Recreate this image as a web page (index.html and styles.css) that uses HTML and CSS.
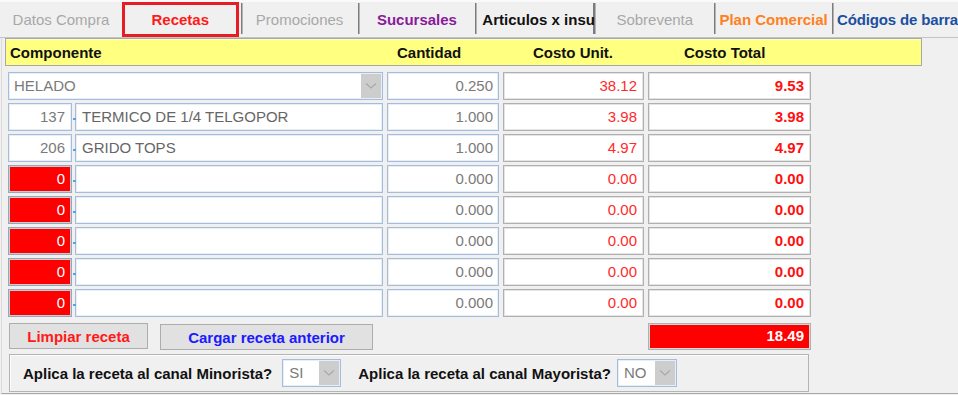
FILE: index.html
```html
<!DOCTYPE html>
<html lang="es">
<head>
  <meta charset="UTF-8" />
  <title>Recetas</title>
  <link rel="stylesheet" href="styles.css">
</head>
<body>
  <div class="tabs">
    <div class="tab tab-first gray">Datos Compra</div>
    <div class="tab tab-active">Recetas</div>
    <div class="tab sep gray w117">Promociones</div>
    <div class="tab sep purple w118">Sucursales</div>
    <div class="tab sep black w119 cut">Articulos x insu</div>
    <div class="tab sep gray w120">Sobreventa</div>
    <div class="tab sep orange w118">Plan Comercial</div>
    <div class="tab sep blue last">Códigos de barra</div>
  </div>

  <div class="panel">
    <div class="grid-head">
      <div class="h1">Componente</div>
      <div class="h2">Cantidad</div>
      <div class="h3">Costo Unit.</div>
      <div class="h4">Costo Total</div>
    </div>

    <div class="rows">
      <div class="row">
        <div class="combo combo-wide">
          <span class="combo-text">HELADO</span>
          <span class="combo-btn"><svg width="12" height="8" viewBox="0 0 12 8"><polyline points="1,1.5 6,6 11,1.5" fill="none" stroke="#a9a9a9" stroke-width="1.2"/></svg></span>
        </div>
        <div class="box box-blue qty">0.250</div>
        <div class="box cost">38.12</div>
        <div class="box total">9.53</div>
      </div>

      <div class="row">
        <div class="comp">
          <div class="box box-blue code">137</div><span class="colon"></span>
          <div class="box box-blue desc">TERMICO DE 1/4 TELGOPOR</div>
        </div>
        <div class="box box-blue qty">1.000</div>
        <div class="box cost">3.98</div>
        <div class="box total">3.98</div>
      </div>

      <div class="row">
        <div class="comp">
          <div class="box box-blue code">206</div><span class="colon"></span>
          <div class="box box-blue desc">GRIDO TOPS</div>
        </div>
        <div class="box box-blue qty">1.000</div>
        <div class="box cost">4.97</div>
        <div class="box total">4.97</div>
      </div>

      <div class="row">
        <div class="comp">
          <div class="box code code-red">0</div><span class="colon"></span>
          <div class="box box-blue desc"></div>
        </div>
        <div class="box box-blue qty">0.000</div>
        <div class="box cost">0.00</div>
        <div class="box total">0.00</div>
      </div>

      <div class="row">
        <div class="comp">
          <div class="box code code-red">0</div><span class="colon"></span>
          <div class="box box-blue desc"></div>
        </div>
        <div class="box box-blue qty">0.000</div>
        <div class="box cost">0.00</div>
        <div class="box total">0.00</div>
      </div>

      <div class="row">
        <div class="comp">
          <div class="box code code-red">0</div><span class="colon"></span>
          <div class="box box-blue desc"></div>
        </div>
        <div class="box box-blue qty">0.000</div>
        <div class="box cost">0.00</div>
        <div class="box total">0.00</div>
      </div>

      <div class="row">
        <div class="comp">
          <div class="box code code-red">0</div><span class="colon"></span>
          <div class="box box-blue desc"></div>
        </div>
        <div class="box box-blue qty">0.000</div>
        <div class="box cost">0.00</div>
        <div class="box total">0.00</div>
      </div>

      <div class="row">
        <div class="comp">
          <div class="box code code-red">0</div><span class="colon"></span>
          <div class="box box-blue desc"></div>
        </div>
        <div class="box box-blue qty">0.000</div>
        <div class="box cost">0.00</div>
        <div class="box total">0.00</div>
      </div>
    </div>

    <div class="actions">
      <div class="buttons">
        <button class="btn btn-red">Limpiar receta</button>
        <button class="btn btn-blue">Cargar receta anterior</button>
      </div>
      <div class="grand-total">18.49</div>
    </div>

    <div class="canal">
      <span class="canal-label">Aplica la receta al canal Minorista?</span>
      <div class="combo combo-small">
        <span class="combo-text">SI</span>
        <span class="combo-btn"><svg width="12" height="8" viewBox="0 0 12 8"><polyline points="1,1.5 6,6 11,1.5" fill="none" stroke="#a9a9a9" stroke-width="1.2"/></svg></span>
      </div>
      <span class="canal-label second">Aplica la receta al canal Mayorista?</span>
      <div class="combo combo-small second">
        <span class="combo-text">NO</span>
        <span class="combo-btn"><svg width="12" height="8" viewBox="0 0 12 8"><polyline points="1,1.5 6,6 11,1.5" fill="none" stroke="#a9a9a9" stroke-width="1.2"/></svg></span>
      </div>
    </div>
  </div>
</body>
</html>
```

FILE: styles.css
```css
body {
  margin: 0;
  background-color: #f0f0f0;
  font-family: 'Liberation Sans', Arial, sans-serif;
  font-size: 15px;
  color: #000;
  overflow: hidden;
}

/* tab strip */
.tabs {
  display: flex;
  height: 37px;
  border-bottom: 1px solid #c4c4c4;
  box-shadow: inset 0 2px 0 #fafafa;
}
.tab {
  box-sizing: border-box;
  height: 31px;
  margin-top: 3px;
  line-height: 34px;
  text-align: center;
  white-space: nowrap;
}
.tab-first {
  width: 122px;
}
.tab-active {
  width: 117px;
  height: 35px;
  margin-top: 2px;
  line-height: 29px;
  border: 3px solid #e81c24;
  color: #ff1a1a;
  font-weight: bold;
}
.sep {
  border-left: 1px solid #7c7c7c;
  box-shadow: inset 1px 0 0 #b4b4b4;
}
.tab-active + .sep {
  margin-left: 2px;
}
.w117 { width: 117px; }
.w118 { width: 118px; }
.w119 { width: 119px; }
.w120 { width: 120px; }
.cut {
  text-align: left;
  padding-left: 6px;
  border-right: 1px solid #7c7c7c;
}
.last {
  flex: 1;
  padding-left: 4px;
  text-align: left;
  letter-spacing: -0.15px;
}
.gray { color: #a8a8a8; }
.purple { color: #8a1a9a; font-weight: bold; }
.black { color: #111; font-weight: bold; }
.orange { color: #ff8020; font-weight: bold; }
.blue { color: #1c4fa0; font-weight: bold; }

/* main panel */
.panel {
  padding-bottom: 1px;
  border-bottom: 1px solid #a8a8a8;
  border-left: 1px solid #dcdcdc;
  margin-left: 1px;
}
.row,
.actions {
  display: grid;
  grid-template-columns: 375px 112px 141px 163px;
  column-gap: 4px;
}
.grid-head {
  box-sizing: border-box;
  display: flex;
  width: 917px;
  height: 28px;
  margin-left: 3px;
  background-color: #ffff80;
  border: 1px solid #a8a8a8;
  box-shadow: inset 0 1px 0 #ffffc8;
  font-weight: bold;
  line-height: 28px;
  color: #111;
}
.h1 { padding-left: 4px; width: 387px; }
.h2 { width: 136px; }
.h3 { width: 151px; }

.rows {
  margin: 6px 0 0 6px;
  display: flex;
  flex-direction: column;
  gap: 3px;
}
.box {
  box-sizing: border-box;
  height: 28px;
  line-height: 26px;
  background-color: #fff;
  border: 1px solid #b0b0b0;
  box-shadow: inset 0 0 0 1px #e4e4e4;
  padding: 0 6px;
  text-align: right;
  white-space: nowrap;
  overflow: hidden;
}
.box-blue {
  border-color: #a6bcd8;
  box-shadow: inset 0 0 0 1px #e6eef8;
}
.qty { color: #7a7a7a; padding-right: 5px; }
.cost { color: #ff2a2a; }
.total { color: #ff1010; font-weight: bold; }

.comp {
  display: flex;
}
.code {
  width: 64px;
  color: #7a7a7a;
}
.code-red {
  background-color: #ff0000;
  border-color: #9aa6b6;
  box-shadow: inset 0 0 0 1px #c8ccd4;
  color: #fff;
}
.colon {
  width: 3px;
  position: relative;
}
.colon::after {
  content: '';
  position: absolute;
  left: 1px;
  top: 15px;
  width: 1px;
  height: 6px;
  border-top: 2px dotted #5aa0e0;
}
.desc {
  flex: 1;
  text-align: left;
  color: #666;
}

/* combo boxes */
.combo {
  box-sizing: border-box;
  display: flex;
  height: 28px;
  background-color: #fff;
  border: 1px solid #a6bcd8;
  box-shadow: inset 0 0 0 1px #e6eef8;
  padding: 1px;
}
.combo-text {
  flex: 1;
  line-height: 24px;
  padding-left: 4px;
  color: #7a7a7a;
}
.combo-btn {
  width: 20px;
  background-color: #cdcdcd;
  display: flex;
  align-items: center;
  justify-content: center;
}
.combo-wide {
  width: 375px;
}
.combo-small {
  width: 59px;
  margin-left: 10px;
}
.combo-small.second {
  width: 60px;
  margin-left: 6px;
}
.combo-small .combo-text {
  padding-left: 5px;
}

/* bottom */
.actions {
  margin: 6px 0 0 6px;
}
.buttons {
  display: flex;
  gap: 12px;
  padding-left: 1px;
}
.btn {
  box-sizing: border-box;
  height: 26px;
  font-family: 'Liberation Sans', Arial, sans-serif;
  font-size: 15px;
  font-weight: bold;
  background-color: #e1e1e1;
  border: 1px solid #adadad;
  padding: 0;
}
.btn-red {
  width: 139px;
  color: #ff1a1a;
}
.btn-blue {
  width: 213px;
  margin-top: 1px;
  color: #1a1aff;
}
.grand-total {
  grid-column: 4;
  box-sizing: border-box;
  height: 27px;
  line-height: 24px;
  background-color: #ff0000;
  border: 1px solid #b0b0b0;
  box-shadow: inset 0 0 0 1px #d8d8d8;
  color: #fff;
  font-weight: bold;
  text-align: right;
  padding-right: 6px;
}

.canal {
  box-sizing: border-box;
  display: flex;
  align-items: center;
  width: 800px;
  height: 38px;
  margin: 4px 0 0 7px;
  padding-left: 13px;
  border: 1px solid #b4b4b4;
  box-shadow: inset 1px 1px 0 #fcfcfc;
}
.canal-label {
  font-weight: bold;
  color: #111;
}
.canal-label.second {
  margin-left: 17px;
}
```
